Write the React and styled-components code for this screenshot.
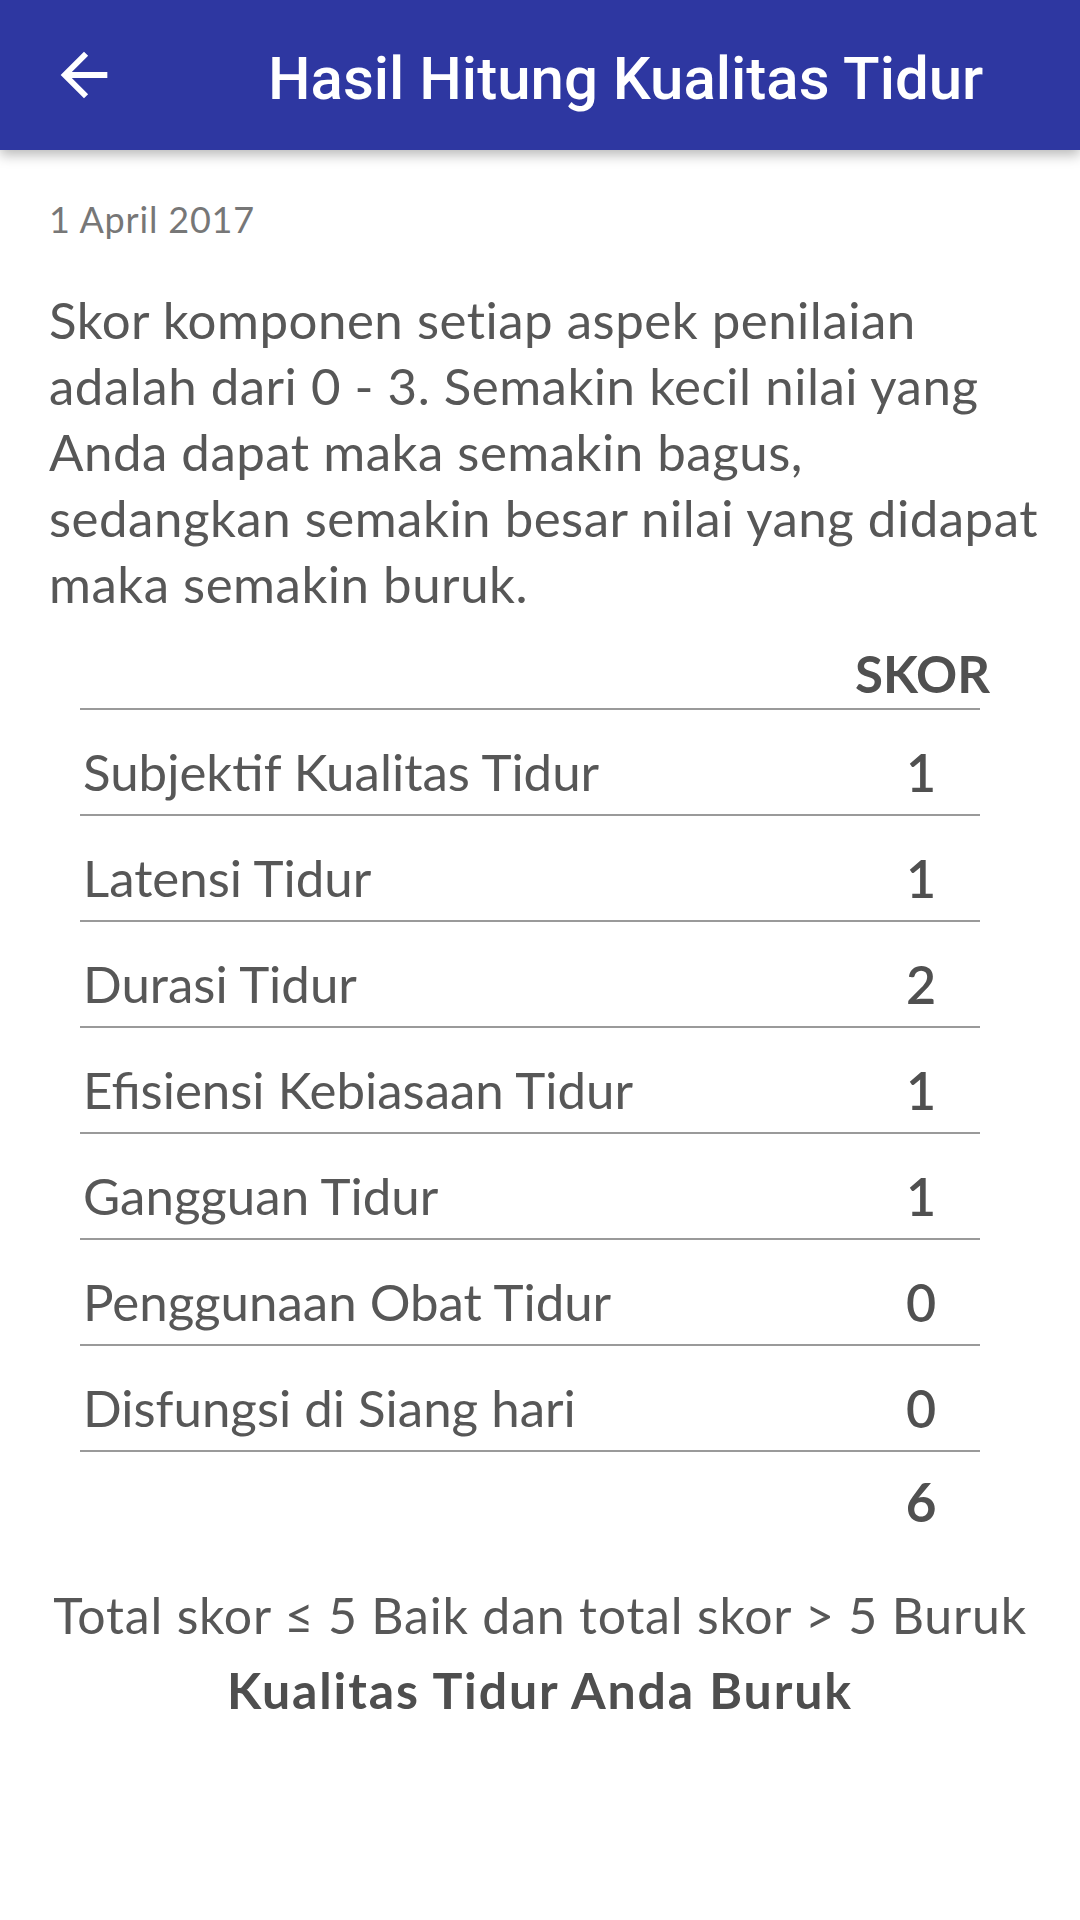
import React from "react";
import styled, { createGlobalStyle } from "styled-components";

const GlobalStyle = createGlobalStyle`
  html, body {
    margin: 0;
    padding: 0;
    background: #ffffff;
  }
  body {
    font-family: "Lato", "Open Sans", sans-serif;
  }
`;

const Page = styled.div`
  width: 1080px;
  min-height: 1920px;
  background: #ffffff;
`;

const Toolbar = styled.header`
  position: relative;
  z-index: 1;
  height: 150px;
  display: flex;
  align-items: center;
  background: #2e37a1;
  box-shadow: 0 5px 12px rgba(0, 0, 0, 0.28);
`;

const BackButton = styled.button`
  width: 70px;
  height: 70px;
  margin-left: 49px;
  padding: 0;
  border: none;
  background: transparent;
  display: flex;
  align-items: center;
  justify-content: center;
  cursor: pointer;
`;

const Title = styled.h1`
  margin: 0 0 0 149px;
  padding-top: 7px;
  font-family: "Roboto", sans-serif;
  font-weight: 500;
  font-size: 60px;
  color: #ffffff;
  white-space: nowrap;
`;

const Content = styled.main`
  padding: 0 49px;
  color: #575757;
`;

const DateText = styled.div`
  margin-top: 47px;
  font-size: 36px;
  line-height: 44px;
  letter-spacing: 0.8px;
  color: #777777;
`;

const Intro = styled.p`
  margin: 46px 0 0;
  font-size: 51px;
  line-height: 66px;
  letter-spacing: 0.5px;
  white-space: nowrap;
`;

const Table = styled.div`
  margin: 27px 51px 0 31px;
  display: flex;
  flex-direction: column;
`;

const Row = styled.div`
  display: flex;
  align-items: flex-end;
  justify-content: space-between;
  height: ${(p) => p.$height || 106}px;
  box-sizing: border-box;
  padding-bottom: ${(p) => p.$pad ?? 12}px;
  border-bottom: 2px solid #9a9a9a;
`;

const Label = styled.span`
  padding-left: 3px;
  font-size: 51px;
  line-height: 60px;
`;

const Score = styled.span`
  width: 132px;
  margin-right: -7px;
  text-align: center;
  font-size: ${(p) => (p.$bold ? 51 : 52)}px;
  font-weight: ${(p) => (p.$bold ? 700 : 600)};
  line-height: 60px;
  color: #505050;
`;

const Total = styled(Score)`
  font-size: 53px;
`;

const TotalRow = styled.div`
  display: flex;
  justify-content: flex-end;
  padding-top: 20px;
`;

const Summary = styled.div`
  margin-top: 46px;
  text-align: center;
  font-size: 50px;
  line-height: 75px;
  letter-spacing: 0.8px;
  white-space: nowrap;
`;

const Verdict = styled.div`
  font-weight: 700;
  letter-spacing: 1.9px;
  color: #4e4e4e;
`;

const ArrowBack = () => (
  <svg width="70" height="70" viewBox="0 0 24 24" fill="#ffffff">
    <path d="M20 11H7.83l5.59-5.59L12 4l-8 8 8 8 1.41-1.41L7.83 13H20v-2z" />
  </svg>
);

const components = [
  { name: "Subjektif Kualitas Tidur", score: 1 },
  { name: "Latensi Tidur", score: 1 },
  { name: "Durasi Tidur", score: 2 },
  { name: "Efisiensi Kebiasaan Tidur", score: 1 },
  { name: "Gangguan Tidur", score: 1 },
  { name: "Penggunaan Obat Tidur", score: 0 },
  { name: "Disfungsi di Siang hari", score: 0 },
];

const App = () => {
  const total = components.reduce((sum, c) => sum + c.score, 0);
  const quality = total <= 5 ? "Baik" : "Buruk";

  return (
    <Page>
      <GlobalStyle />
      <Toolbar>
        <BackButton aria-label="Kembali">
          <ArrowBack />
        </BackButton>
        <Title>Hasil Hitung Kualitas Tidur</Title>
      </Toolbar>
      <Content>
        <DateText>1 April 2017</DateText>
        <Intro>
          Skor komponen setiap aspek penilaian
          <br />
          adalah dari 0 - 3. Semakin kecil nilai yang
          <br />
          Anda dapat maka semakin bagus,
          <br />
          sedangkan semakin besar nilai yang didapat
          <br />
          maka semakin buruk.
        </Intro>
        <Table>
          <Row $height={66} $pad={4}>
            <Label />
            <Score $bold>SKOR</Score>
          </Row>
          {components.map((c) => (
            <Row key={c.name}>
              <Label>{c.name}</Label>
              <Score>{c.score}</Score>
            </Row>
          ))}
          <TotalRow>
            <Total $bold>{total}</Total>
          </TotalRow>
        </Table>
        <Summary>
          Total skor ≤ 5 Baik dan total skor &gt; 5 Buruk
          <Verdict>Kualitas Tidur Anda {quality}</Verdict>
        </Summary>
      </Content>
    </Page>
  );
};

export default App;
